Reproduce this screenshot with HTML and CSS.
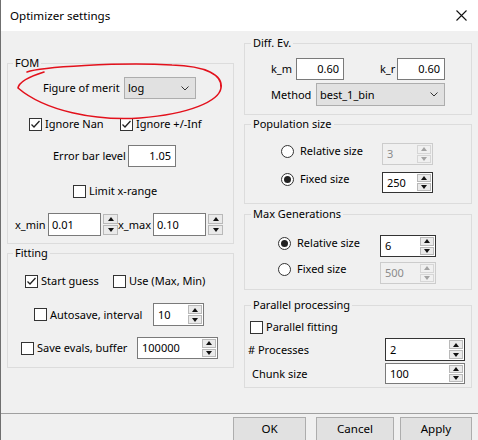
FILE: index.html
```html
<!DOCTYPE html>
<html>
<head>
<meta charset="utf-8">
<link rel="stylesheet" href="styles.css">
</head>
<body>
<div class="window">
  <div class="titlebar">
    <span class="title">Optimizer settings</span>
    <svg class="close" width="11" height="11" viewBox="0 0 11 11"><path d="M0.5 0.5 L10.5 10.5 M10.5 0.5 L0.5 10.5" stroke="#111" stroke-width="1.1" fill="none"/></svg>
  </div>

  <div class="main">
    <div class="col col-left">
      <fieldset class="group g-fom">
        <legend>FOM</legend>
        <div class="row r-fom">
          <span class="lbl w-fom">Figure of merit</span>
          <div class="combo w-log"><span class="cv">log</span><svg class="chev" width="8" height="5" viewBox="0 0 8 5"><path d="M0.5 0.5 L4 4 L7.5 0.5" stroke="#333" fill="none"/></svg></div>
        </div>
        <div class="row r-ign">
          <label class="chk w-nan"><span class="box"><svg width="11" height="11" viewBox="0 0 11 11"><path d="M1.5 5.5 L4 8 L9.5 2" stroke="#222" stroke-width="1.3" fill="none"/></svg></span>Ignore Nan</label>
          <label class="chk"><span class="box"><svg width="11" height="11" viewBox="0 0 11 11"><path d="M1.5 5.5 L4 8 L9.5 2" stroke="#222" stroke-width="1.3" fill="none"/></svg></span>Ignore +/-Inf</label>
        </div>
        <div class="row r-err">
          <span class="lbl w-err">Error bar level</span>
          <div class="field w-err-in right">1.05</div>
        </div>
        <div class="row r-lim">
          <label class="chk"><span class="box"></span>Limit x-range</label>
        </div>
        <div class="row r-x">
          <span class="lbl w-xmin">x_min</span>
          <div class="field w-xin">0.01</div>
          <div class="sbtns"><span class="sb"><i class="up"></i></span><span class="sb"><i class="dn"></i></span></div>
          <span class="lbl w-xmax">x_max</span>
          <div class="field w-xin">0.10</div>
          <div class="sbtns"><span class="sb"><i class="up"></i></span><span class="sb"><i class="dn"></i></span></div>
        </div>
      </fieldset>

      <fieldset class="group g-fit">
        <legend>Fitting</legend>
        <div class="row r-sg">
          <label class="chk w-sg"><span class="box"><svg width="11" height="11" viewBox="0 0 11 11"><path d="M1.5 5.5 L4 8 L9.5 2" stroke="#222" stroke-width="1.3" fill="none"/></svg></span>Start guess</label>
          <label class="chk"><span class="box"></span>Use (Max, Min)</label>
        </div>
        <div class="row r-auto">
          <label class="chk w-auto"><span class="box"></span>Autosave, interval</label>
          <div class="spin w-auto-in"><span class="sv">10</span><span class="arrows"><span class="sb"><i class="up"></i></span><span class="sb"><i class="dn"></i></span></span></div>
        </div>
        <div class="row r-save">
          <label class="chk w-save"><span class="box"></span>Save evals, buffer</label>
          <div class="spin w-save-in"><span class="sv">100000</span><span class="arrows"><span class="sb"><i class="up"></i></span><span class="sb"><i class="dn"></i></span></span></div>
        </div>
      </fieldset>
    </div>

    <div class="col col-right">
      <fieldset class="group g-de">
        <legend>Diff. Ev.</legend>
        <div class="row r-k">
          <span class="lbl w-km">k_m</span>
          <div class="field w-k right">0.60</div>
          <span class="lbl w-kr">k_r</span>
          <div class="field w-k right">0.60</div>
        </div>
        <div class="row r-meth">
          <span class="lbl w-meth">Method</span>
          <div class="combo w-method"><span class="cv">best_1_bin</span><svg class="chev" width="8" height="5" viewBox="0 0 8 5"><path d="M0.5 0.5 L4 4 L7.5 0.5" stroke="#333" fill="none"/></svg></div>
        </div>
      </fieldset>

      <fieldset class="group g-pop">
        <legend>Population size</legend>
        <div class="row r-p1">
          <label class="rad w-pop"><span class="circ"></span>Relative size</label>
          <div class="spin w-pop-in disabled"><span class="sv">3</span><span class="arrows"><span class="sb"><i class="up"></i></span><span class="sb"><i class="dn"></i></span></span></div>
        </div>
        <div class="row r-p2">
          <label class="rad w-pop"><span class="circ on"></span>Fixed size</label>
          <div class="spin w-pop-in dark"><span class="sv">250</span><span class="arrows"><span class="sb"><i class="up"></i></span><span class="sb"><i class="dn"></i></span></span></div>
        </div>
      </fieldset>

      <fieldset class="group g-gen">
        <legend>Max Generations</legend>
        <div class="row r-m1">
          <label class="rad w-gen"><span class="circ on"></span>Relative size</label>
          <div class="spin w-gen-in dark"><span class="sv">6</span><span class="arrows"><span class="sb"><i class="up"></i></span><span class="sb"><i class="dn"></i></span></span></div>
        </div>
        <div class="row r-m2">
          <label class="rad w-gen"><span class="circ"></span>Fixed size</label>
          <div class="spin w-gen-in disabled"><span class="sv">500</span><span class="arrows"><span class="sb"><i class="up"></i></span><span class="sb"><i class="dn"></i></span></span></div>
        </div>
      </fieldset>

      <fieldset class="group g-par">
        <legend>Parallel processing</legend>
        <div class="row r-pf">
          <label class="chk"><span class="box"></span>Parallel fitting</label>
        </div>
        <div class="row r-proc">
          <span class="lbl w-proc">#&nbsp;Processes</span>
          <div class="spin w-par-in dark"><span class="sv">2</span><span class="arrows"><span class="sb"><i class="up"></i></span><span class="sb"><i class="dn"></i></span></span></div>
        </div>
        <div class="row r-chunk">
          <span class="lbl w-chunk">Chunk size</span>
          <div class="spin w-par-in"><span class="sv">100</span><span class="arrows"><span class="sb"><i class="up"></i></span><span class="sb"><i class="dn"></i></span></span></div>
        </div>
      </fieldset>
    </div>
  </div>

  <div class="buttonbar">
    <div class="btn b-ok">OK</div>
    <div class="btn b-cancel">Cancel</div>
    <div class="btn b-apply">Apply</div>
  </div>

  <svg class="annot" width="240" height="130" viewBox="0 0 240 130"><path d="M27 72 C 40 67, 120 62, 172 65 C 206 66, 223 75, 221 88 C 219 101, 190 114, 140 118 C 95 121, 45 111, 18 88 C 19 82, 28 77, 44 72" stroke="#e3111c" stroke-width="1.6" fill="none" stroke-linecap="round"/></svg>
</div>
</body>
</html>
```

FILE: styles.css
```css
* { box-sizing: border-box; }
html, body { margin: 0; padding: 0; }
body {
  width: 478px;
  height: 440px;
  overflow: hidden;
  background: #f0f0f0;
  font-family: "Noto Sans", "Open Sans", sans-serif;
  font-size: 11px;
  color: #000;
}
.window {
  position: relative;
  width: 478px;
  height: 440px;
  border-left: 1px solid #6f6f6f;
  display: flex;
  flex-direction: column;
  background: #f0f0f0;
}
.titlebar {
  height: 31px;
  flex: none;
  background: #fff;
  display: flex;
  align-items: center;
  justify-content: space-between;
  padding: 0 11px 0 9px;
}
.title { font-size: 11.6px; line-height: 16px; margin-top: 1px; }

.main {
  flex: 1;
  display: flex;
  gap: 10px;
  padding-left: 6px;
}
.col { display: flex; flex-direction: column; }
.col-left { width: 227px; padding-top: 24px; }
.col-right { width: 228px; padding-top: 4px; }

.group {
  margin: 0;
  padding: 0;
  min-width: 0;
  border: 1px solid #dcdcdc;
  display: flex;
  flex-direction: column;
}
.group legend {
  padding: 0 2px;
  margin-left: 5px;
  line-height: 16px;
  height: 16px;
}
.col-right .group legend { margin-left: 6px; }

.row { display: flex; align-items: center; }
.lbl { line-height: 16px; white-space: nowrap; }

/* FOM rows */
.g-fom { padding-bottom: 7px; }
.r-fom { margin-top: 6px; height: 22px; padding-left: 35px; }
.w-fom { width: 81px; }
.w-log { width: 72px; }
.r-ign { margin-top: 17px; height: 16px; padding-left: 21px; }
.w-nan { width: 91px; }
.r-err { margin-top: 13px; height: 22px; padding-left: 45px; }
.w-err { width: 75px; }
.w-err-in { width: 48px; }
.r-lim { margin-top: 16px; height: 16px; padding-left: 65px; }
.r-x { margin-top: 14px; height: 23px; padding-left: 7px; }
.w-xmin { width: 33px; }
.w-xmax { width: 35px; }
.w-xin { width: 53px; text-align: left; }

/* Fitting */
.g-fit { margin-top: 1px; padding-bottom: 8px; }
.r-sg { margin-top: 12px; height: 16px; padding-left: 17px; }
.w-sg { width: 88px; }
.r-auto { margin-top: 14px; height: 23px; padding-left: 26px; }
.w-auto { width: 119px; }
.w-auto-in { width: 51px; }
.r-save { margin-top: 11px; height: 22px; padding-left: 13px; }
.w-save { width: 116px; }
.w-save-in { width: 81px; }

/* Diff Ev */
.g-de { padding-bottom: 8px; }
.r-k { margin-top: 7px; height: 22px; padding-left: 26px; }
.w-km { width: 25px; }
.w-kr { width: 17px; margin-left: 36px; }
.w-k { width: 48px; }
.r-meth { margin-top: 3px; height: 23px; padding-left: 26px; }
.w-meth { width: 45px; }
.w-method { width: 129px; }

/* Population */
.g-pop { margin-top: 1px; padding-bottom: 10px; }
.r-p1 { margin-top: 11px; height: 22px; padding-left: 36px; }
.r-p2 { margin-top: 7px; height: 21px; padding-left: 36px; }
.w-pop { width: 101px; }
.w-pop-in { width: 51px; }

/* Max generations */
.g-gen { margin-top: 2px; padding-bottom: 5px; }
.r-m1 { margin-top: 13px; height: 22px; padding-left: 33px; }
.r-m2 { margin-top: 5px; height: 22px; padding-left: 33px; }
.w-gen { width: 102px; }
.w-gen-in { width: 56px; }

/* Parallel */
.g-par { margin-top: 7px; padding-bottom: 3px; }
.r-pf { margin-top: 6px; height: 16px; padding-left: 5px; }
.r-proc { margin-top: 3px; height: 23px; padding-left: 3px; }
.w-proc { width: 137px; }
.r-chunk { margin-top: 2px; height: 21px; padding-left: 7px; }
.w-chunk { width: 133px; }
.w-par-in { width: 80px; }

/* Widgets */
.combo {
  height: 100%;
  background: #e1e1e1;
  border: 1px solid #adadad;
  display: flex;
  align-items: center;
  justify-content: space-between;
  padding: 0 6px 0 3px;
}
.cv { line-height: 16px; }

.field {
  height: 100%;
  background: #fff;
  border: 1px solid #7a7a7a;
  display: flex;
  align-items: center;
  padding: 0 4px 0 3px;
  line-height: 16px;
}
.field.right { justify-content: flex-end; }

.chk, .rad {
  display: flex;
  align-items: center;
  gap: 3px;
  line-height: 16px;
  white-space: nowrap;
}
.box {
  width: 13px;
  height: 13px;
  flex: none;
  border: 1px solid #333;
  background: #fff;
  display: flex;
  align-items: center;
  justify-content: center;
}
.box svg { display: block; }
.circ {
  width: 13px;
  height: 13px;
  flex: none;
  border: 1px solid #333;
  border-radius: 50%;
  background: #fff;
  display: flex;
  align-items: center;
  justify-content: center;
  margin-right: 3px;
}
.circ.on::after {
  content: "";
  width: 7px;
  height: 7px;
  border-radius: 50%;
  background: #222;
}
.rad { align-self: flex-start; }
.r-p2 .rad, .r-m2 .rad { margin-top: -1px; }

.spin {
  height: 100%;
  display: flex;
  border: 1px solid #7a7a7a;
  background: #fff;
}
.spin.dark { border-color: #333; }
.spin .sv {
  flex: 1;
  display: flex;
  align-items: center;
  padding-left: 4px;
  line-height: 16px;
}
.arrows {
  width: 15px;
  display: flex;
  flex-direction: column;
  gap: 1px;
  padding: 1px 1px 1px 0;
}
.sb {
  flex: 1;
  border: 1px solid #b9b9b9;
  background: #eaeaea;
  display: flex;
  align-items: center;
  justify-content: center;
}
.sb i { display: block; width: 0; height: 0; }
.sb i.up { border-left: 3.5px solid transparent; border-right: 3.5px solid transparent; border-bottom: 4px solid #111; }
.sb i.dn { border-left: 3.5px solid transparent; border-right: 3.5px solid transparent; border-top: 4px solid #111; }
.sbtns {
  width: 15px;
  height: 100%;
  margin: 0 0 0 2px;
  display: flex;
  flex-direction: column;
  gap: 1px;
  padding: 1px 0;
}
.spin.disabled { background: #f0f0f0; border-color: #cccccc; color: #8b8b8b; }
.spin.disabled .sb { border-color: #d6d6d6; background: #f0f0f0; }
.spin.disabled .sb i.up { border-bottom-color: #a3a3a3; }
.spin.disabled .sb i.dn { border-top-color: #a3a3a3; }

.buttonbar {
  height: 27px;
  flex: none;
  border-top: 1px solid #a0a0a0;
  display: flex;
  align-items: flex-start;
  padding: 3px 0 0 232px;
}
.btn {
  height: 24px;
  background: #e1e1e1;
  border: 1px solid #adadad;
  display: flex;
  align-items: center;
  justify-content: center;
  font-size: 11.6px;
  line-height: 16px;
}
.b-ok { width: 73px; }
.b-cancel { width: 78px; margin-left: 10px; }
.b-apply { width: 72px; margin-left: 6px; }

.annot {
  position: absolute;
  left: -1px;
  top: 0;
  pointer-events: none;
}
```
